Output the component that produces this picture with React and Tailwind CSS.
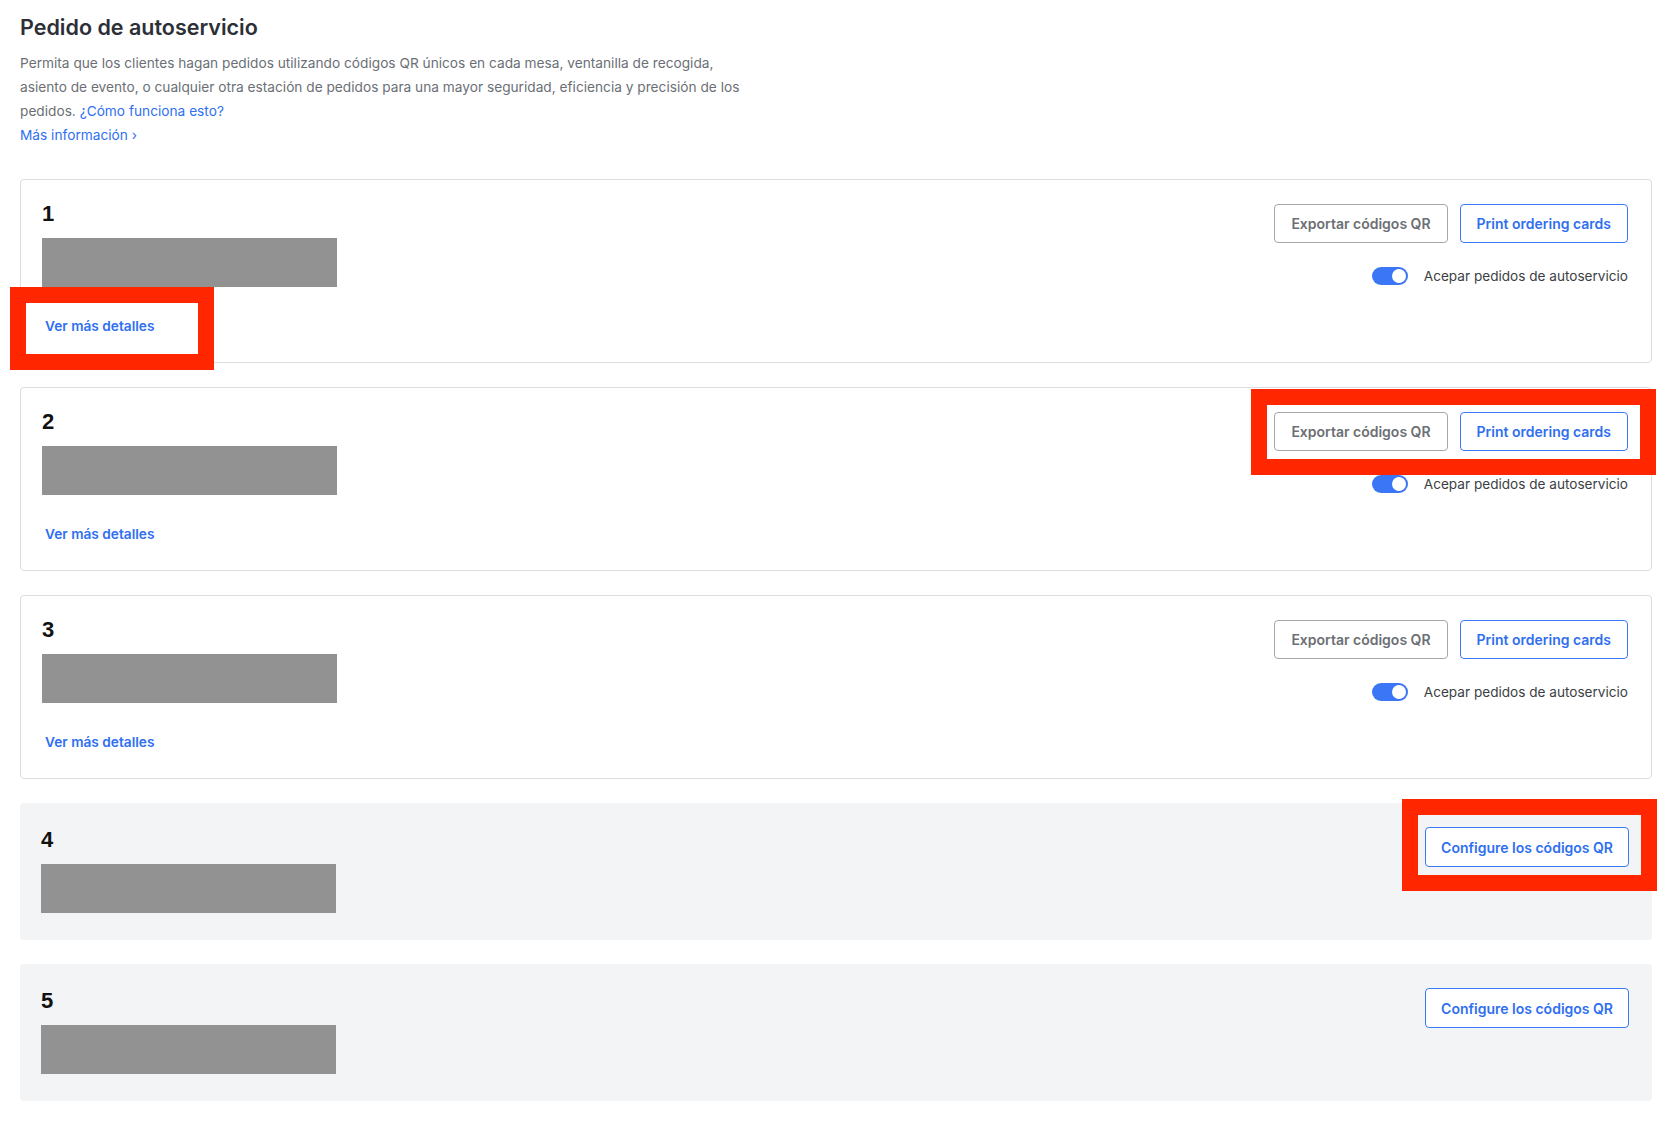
import React from 'react'

const font = { fontFamily: 'Inter, "Liberation Sans", Arial, sans-serif' }

// red annotation frame laid over a highlighted element
const Mark = ({ className }) => (
  <div className={`pointer-events-none absolute border-[16px] border-[#ff2600] ${className}`} />
)

const Toggle = () => (
  <span className="relative inline-flex h-[18px] w-[36px] shrink-0 rounded-full bg-[#3a76f6]">
    <span className="absolute right-[2px] top-[2px] h-[14px] w-[14px] rounded-full bg-white" />
  </span>
)

const Placeholder = () => <div className="mt-[10px] h-[49px] w-[295px] bg-[#929292]" />

const Number = ({ n }) => (
  <div
    className="text-[22px] font-bold leading-[28px] text-[#111]"
    style={{ fontFamily: '"Liberation Sans", Arial, sans-serif' }}
  >
    {n}
  </div>
)

function ActiveCard({ n, markDetails, markButtons }) {
  return (
    <div className="flex justify-between rounded-[4px] border border-[#dcdde0] bg-white pl-[21px] pr-[23px] pt-[20px] pb-[26px]">
      <div>
        <Number n={n} />
        <Placeholder />
        <div className="relative mt-[29px] w-fit">
          <a className="ml-[3px] block text-[13.7px] font-semibold leading-[20px] text-[#2f6ff0]">Ver más detalles</a>
          {markDetails && <Mark className="left-[-32px] right-[-60px] top-[-29px] bottom-[-34px]" />}
        </div>
      </div>
      <div className="flex flex-col items-end pt-[4px]">
        <div className="relative flex gap-3">
          <button className="h-[39px] rounded-[4px] border border-[#a4a7ab] bg-white px-[16px] text-[14px] font-semibold text-[#6c6f74]">
            Exportar códigos QR
          </button>
          <button className="h-[39px] rounded-[4px] border border-[#3b79f5] bg-white px-[16px] text-[14px] font-semibold text-[#2f6ff0]">
            Print ordering cards
          </button>
          {markButtons && <Mark className="left-[-23px] right-[-28px] top-[-23px] bottom-[-24px]" />}
        </div>
        <div className="mt-[23px] flex items-center gap-4">
          <Toggle />
          <span className="text-[13.6px] leading-[20px] text-[#3b3e43]">Acepar pedidos de autoservicio</span>
        </div>
      </div>
    </div>
  )
}

function SetupCard({ n, mark }) {
  return (
    <div className="flex justify-between rounded-[4px] bg-[#f3f4f6] pl-[21px] pr-[23px] pt-[23px] pb-[27px]">
      <div>
        <Number n={n} />
        <Placeholder />
      </div>
      <div className="pt-[1px]">
        <div className="relative">
          <button className="h-[40px] rounded-[4px] border border-[#3b79f5] bg-white px-[15px] text-[14px] font-semibold text-[#2f6ff0]">
            Configure los códigos QR
          </button>
          {mark && <Mark className="left-[-23px] right-[-28px] top-[-28px] bottom-[-24px]" />}
        </div>
      </div>
    </div>
  )
}

export default function App() {
  return (
    <div className="min-h-screen bg-white px-5 pt-[13px] pb-8" style={font}>
      <h1 className="text-[21.5px] font-semibold leading-[28px] text-[#2c3036]">Pedido de autoservicio</h1>
      <p className="mt-[10px] max-w-[740px] text-[13.7px] leading-[24px] text-[#6b6f75]">
        Permita que los clientes hagan pedidos utilizando códigos QR únicos en cada mesa, ventanilla de recogida,
        asiento de evento, o cualquier otra estación de pedidos para una mayor seguridad, eficiencia y precisión de los
        pedidos. <a className="text-[#2f6ff0]">¿Cómo funciona esto?</a>
      </p>
      <a className="block text-[13.7px] leading-[24px] text-[#2f6ff0]">Más información ›</a>

      <div className="mt-[32px] flex flex-col gap-6">
        <ActiveCard n="1" markDetails />
        <ActiveCard n="2" markButtons />
        <ActiveCard n="3" />
        <SetupCard n="4" mark />
        <SetupCard n="5" />
      </div>
    </div>
  )
}
